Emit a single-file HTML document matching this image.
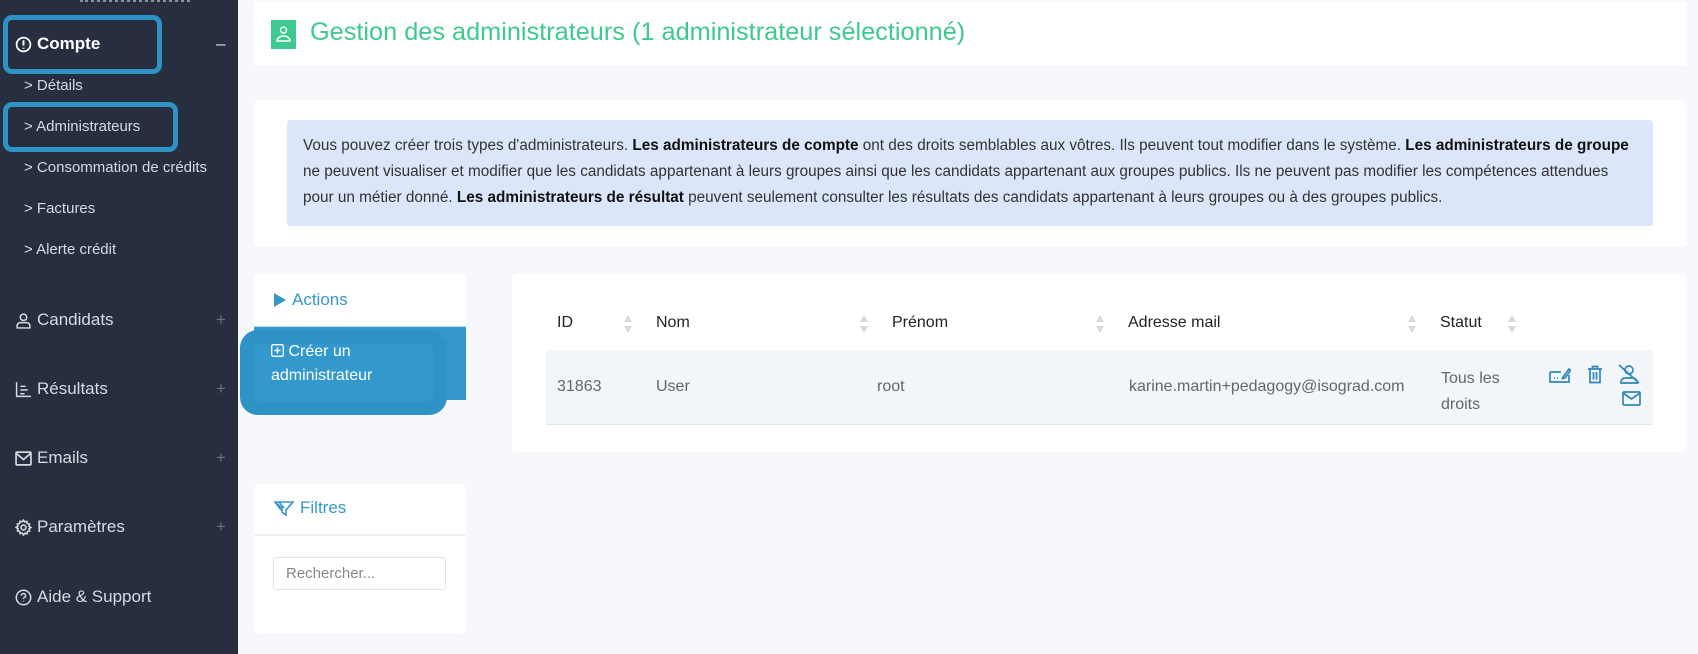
<!DOCTYPE html>
<html><head><meta charset="utf-8"><style>
*{box-sizing:border-box;margin:0;padding:0}
body{width:1698px;height:654px;overflow:hidden;background:#f6f8fc;font-family:"Liberation Sans",sans-serif;position:relative}
.sb{position:absolute;left:0;top:0;width:238px;height:654px;background:#272e40;color:#d7dae0}
.sb div{position:absolute;white-space:nowrap}
.main{font-size:17px;left:15px;display:flex;align-items:center;gap:5px}
.sub{font-size:15px;left:24px}
.pl{position:absolute;left:216px;color:#6b7280;font-size:17px}
.hl{position:absolute;border:5px solid #2e93c4;border-radius:9px}
.card{position:absolute;background:#fff;border-radius:5px}
.ic{display:inline-block;vertical-align:middle}
.th{position:absolute;top:314px;font-size:16px;color:#222}
.ar{position:absolute;top:314px;width:10px;height:20px}
.td{position:absolute;font-size:16px;color:#666}
</style></head><body>
<div class="sb">
 <div style="left:80px;top:-6px;width:110px;height:8px;border-bottom:3px dotted #8a909c"></div>
 <div class="hl" style="left:3px;top:15px;width:159px;height:59px"></div>
 <div class="main" style="top:34px;font-weight:bold;color:#fff"><svg width="17" height="17" viewBox="0 0 16 16"><circle cx="8" cy="8" r="6.5" fill="none" stroke="#fff" stroke-width="1.6"/><path d="M8 4v5M8 11v1" stroke="#fff" stroke-width="1.8"/></svg>Compte</div>
 <div class="pl" style="top:34px;color:#ddd">–</div>
 <div class="sub" style="top:77px">&gt; Détails</div>
 <div class="hl" style="left:3px;top:102px;width:175px;height:50px"></div>
 <div class="sub" style="top:118px">&gt; Administrateurs</div>
 <div class="sub" style="top:159px">&gt; Consommation de crédits</div>
 <div class="sub" style="top:200px">&gt; Factures</div>
 <div class="sub" style="top:241px">&gt; Alerte crédit</div>
 <div class="main" style="top:310px"><svg width="17" height="17" viewBox="0 0 16 16" fill="none" stroke="#d7dae0" stroke-width="1.4"><circle cx="8" cy="5" r="3"/><path d="M2 15v-2a3 3 0 0 1 3-3h6a3 3 0 0 1 3 3v2z"/></svg>Candidats</div><div class="pl" style="top:310px">+</div>
 <div class="main" style="top:379px"><svg width="17" height="17" viewBox="0 0 16 16" fill="none" stroke="#d7dae0" stroke-width="1.4"><path d="M1.5 1v13.5H15M5 5h5M5 8.5h7M5 12h4"/></svg>Résultats</div><div class="pl" style="top:379px">+</div>
 <div class="main" style="top:448px"><svg width="17" height="15" viewBox="0 0 16 14" fill="none" stroke="#d7dae0" stroke-width="1.6"><rect x="1" y="1" width="14" height="12" rx="1"/><path d="M1 2l7 6 7-6"/></svg>Emails</div><div class="pl" style="top:448px">+</div>
 <div class="main" style="top:517px"><svg width="17" height="17" viewBox="0 0 16 16" fill="none" stroke="#d7dae0" stroke-width="1.5"><circle cx="8" cy="8" r="2.3"/><path d="M8 1l1.2 1.8 2-.6.4 2.1 2.1.6-.6 2L15 8l-1.8 1.2.6 2-2.1.6-.4 2.1-2-.6L8 15l-1.2-1.8-2 .6-.4-2.1-2.1-.6.6-2L1 8l1.8-1.2-.6-2 2.1-.6.4-2.1 2 .6z"/></svg>Paramètres</div><div class="pl" style="top:517px">+</div>
 <div class="main" style="top:587px"><svg width="17" height="17" viewBox="0 0 16 16" fill="none" stroke="#d7dae0" stroke-width="1.4"><circle cx="8" cy="8" r="6.8"/><path d="M6 6.3a2 2 0 1 1 2.6 1.9c-.5.2-.6.6-.6 1.2M8 11v.8"/></svg>Aide &amp; Support</div>
</div>

<div class="card" style="left:254px;top:2px;width:1433px;height:63px;border-radius:0">
 <svg style="position:absolute;left:17px;top:18px" width="25" height="29" viewBox="0 0 25 29"><rect width="25" height="29" fill="#3ec98e"/><circle cx="12.5" cy="10" r="3" fill="none" stroke="#fff" stroke-width="1.4"/><path d="M6 21a6.5 5 0 0 1 13 0z" fill="none" stroke="#fff" stroke-width="1.4"/></svg>
 <div style="position:absolute;left:56px;top:16px;font-size:25.3px;color:#3ec98e;white-space:nowrap">Gestion des administrateurs (1 administrateur sélectionné)</div>
</div>

<div class="card" style="left:254px;top:100px;width:1433px;height:147px">
 <div style="position:absolute;left:33px;top:20px;width:1366px;height:106px;background:#dbe6fb;border-radius:3px;padding:13px 16px 0 16px;font-size:15.3px;line-height:26px;color:#333">Vous pouvez créer trois types d'administrateurs. <b style="color:#111">Les administrateurs de compte</b> ont des droits semblables aux vôtres. Ils peuvent tout modifier dans le système. <b style="color:#111">Les administrateurs de groupe</b> ne peuvent visualiser et modifier que les candidats appartenant à leurs groupes ainsi que les candidats appartenant aux groupes publics. Ils ne peuvent pas modifier les compétences attendues pour un métier donné. <b style="color:#111">Les administrateurs de résultat</b> peuvent seulement consulter les résultats des candidats appartenant à leurs groupes ou à des groupes publics.</div>
</div>

<div class="card" style="left:254px;top:274px;width:212px;height:126px;overflow:hidden;border-radius:5px 5px 0 0">
 <div style="position:absolute;left:20px;top:16px;font-size:17px;color:#3399cc;display:flex;align-items:center;gap:6px"><svg width="12" height="14" viewBox="0 0 12 14"><path d="M0 0l12 7-12 7z" fill="#3399cc"/></svg>Actions</div>
 <div style="position:absolute;left:0;top:52px;width:212px;height:74px;background:#3399cc;border-top:1px solid #c9d8e6"></div>
</div>
<div style="position:absolute;left:240px;top:330px;width:207px;height:85px;border:14px solid #2e93c4;border-radius:18px;background:#3399cc"></div>
<div style="position:absolute;left:271px;top:340px;font-size:16px;line-height:24px;color:#fff"><svg class="ic" width="13" height="13" viewBox="0 0 13 13" style="margin-top:-3px"><rect x=".7" y=".7" width="11.6" height="11.6" rx="1.5" fill="none" stroke="#fff" stroke-width="1.3"/><path d="M6.5 3.5v6M3.5 6.5h6" stroke="#fff" stroke-width="1.4"/></svg> Créer un<br>administrateur</div>

<div class="card" style="left:254px;top:484px;width:212px;height:149px">
 <div style="position:absolute;left:20px;top:14px;font-size:17px;color:#3399cc;display:flex;align-items:center;gap:6px"><svg width="20" height="16" viewBox="0 0 20 16" fill="none" stroke="#3399cc" stroke-width="1.6"><path d="M1 2h18L12 10v5l-4-3V8zM1 2l6 8M5 2l5 6"/></svg>Filtres</div>
 <div style="position:absolute;left:0;top:50px;width:212px;border-top:2px solid #eef0f3"></div>
 <div style="position:absolute;left:19px;top:73px;width:173px;height:33px;border:1px solid #e0e4ea;border-radius:3px;padding:7px 12px;font-size:15px;color:#888">Rechercher...</div>
</div>

<div class="card" style="left:512px;top:274px;width:1175px;height:178px">
 <div style="position:absolute;left:34px;top:76px;width:1107px;height:75px;background:#f2f5f9;border-bottom:1px solid #e3e7ec"></div>
</div>
<div class="th" style="left:557px">ID</div>
<div class="th" style="left:656px">Nom</div>
<div class="th" style="left:892px">Prénom</div>
<div class="th" style="left:1128px">Adresse mail</div>
<div class="th" style="left:1440px">Statut</div>
<svg class="ar" style="left:623px" viewBox="0 0 10 20"><path d="M5 1l4 7H1zM5 19l4-7H1z" fill="#d6d9de"/></svg>
<svg class="ar" style="left:859px" viewBox="0 0 10 20"><path d="M5 1l4 7H1zM5 19l4-7H1z" fill="#d6d9de"/></svg>
<svg class="ar" style="left:1095px" viewBox="0 0 10 20"><path d="M5 1l4 7H1zM5 19l4-7H1z" fill="#d6d9de"/></svg>
<svg class="ar" style="left:1407px" viewBox="0 0 10 20"><path d="M5 1l4 7H1zM5 19l4-7H1z" fill="#d6d9de"/></svg>
<svg class="ar" style="left:1507px" viewBox="0 0 10 20"><path d="M5 1l4 7H1zM5 19l4-7H1z" fill="#d6d9de"/></svg>
<div class="td" style="left:557px;top:378px">31863</div>
<div class="td" style="left:656px;top:378px">User</div>
<div class="td" style="left:877px;top:378px">root</div>
<div class="td" style="left:1129px;top:378px">karine.martin+pedagogy@isograd.com</div>
<div class="td" style="left:1441px;top:366px;line-height:26px">Tous les<br>droits</div>
<svg style="position:absolute;left:1549px;top:366px" width="22" height="18" viewBox="0 0 22 18" fill="none" stroke="#2f86bd" stroke-width="1.7"><path d="M12 6H2a1 1 0 0 0-1 1v9h19v-7"/><path d="M14 11l6-8 1.5 1.5L16 12l-2.5.5z"/><path d="M5 12h1M8 12h1"/></svg>
<svg style="position:absolute;left:1587px;top:365px" width="16" height="19" viewBox="0 0 16 19" fill="none" stroke="#2f86bd" stroke-width="1.7"><path d="M1 4h14M5.5 4V1.5h5V4M3 4v13.5h10V4M6.5 7v7.5M9.5 7v7.5"/></svg>
<svg style="position:absolute;left:1618px;top:364px" width="22" height="20" viewBox="0 0 22 20" fill="none" stroke="#2f86bd" stroke-width="1.7"><circle cx="11" cy="6" r="4"/><path d="M3 19v-1a4 4 0 0 1 4-4h8a4 4 0 0 1 4 4v1zM1 1l20 18"/></svg>
<svg style="position:absolute;left:1622px;top:391px" width="19" height="15" viewBox="0 0 19 15" fill="none" stroke="#2f86bd" stroke-width="1.7"><rect x="1" y="1" width="17" height="13" rx="1"/><path d="M1 2l8.5 6L18 2"/></svg>
</body></html>
